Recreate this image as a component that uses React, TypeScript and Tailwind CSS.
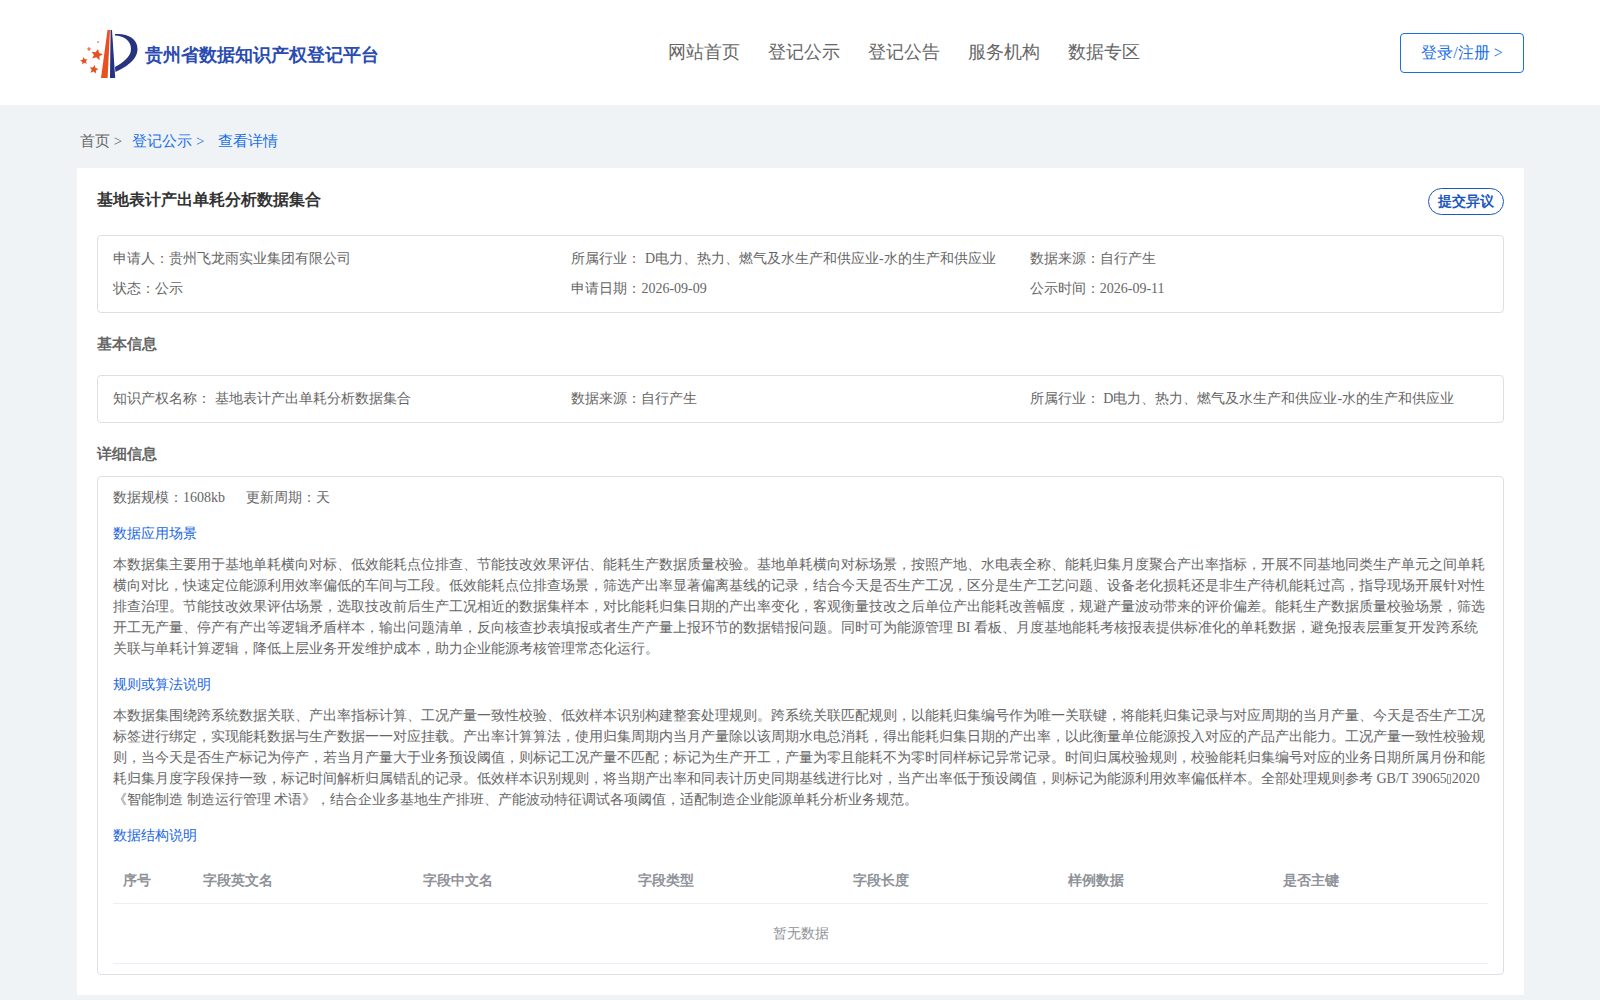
const navItems = ['网站首页', '登记公示', '登记公告', '服务机构', '数据专区'];

const sceneText =
  '本数据集主要用于基地单耗横向对标、低效能耗点位排查、节能技改效果评估、能耗生产数据质量校验。基地单耗横向对标场景，按照产地、水电表全称、能耗归集月度聚合产出率指标，开展不同基地同类生产单元之间单耗横向对比，快速定位能源利用效率偏低的车间与工段。低效能耗点位排查场景，筛选产出率显著偏离基线的记录，结合今天是否生产工况，区分是生产工艺问题、设备老化损耗还是非生产待机能耗过高，指导现场开展针对性排查治理。节能技改效果评估场景，选取技改前后生产工况相近的数据集样本，对比能耗归集日期的产出率变化，客观衡量技改之后单位产出能耗改善幅度，规避产量波动带来的评价偏差。能耗生产数据质量校验场景，筛选开工无产量、停产有产出等逻辑矛盾样本，输出问题清单，反向核查抄表填报或者生产产量上报环节的数据错报问题。同时可为能源管理 BI 看板、月度基地能耗考核报表提供标准化的单耗数据，避免报表层重复开发跨系统关联与单耗计算逻辑，降低上层业务开发维护成本，助力企业能源考核管理常态化运行。';

const ruleBefore =
  '本数据集围绕跨系统数据关联、产出率指标计算、工况产量一致性校验、低效样本识别构建整套处理规则。跨系统关联匹配规则，以能耗归集编号作为唯一关联键，将能耗归集记录与对应周期的当月产量、今天是否生产工况标签进行绑定，实现能耗数据与生产数据一一对应挂载。产出率计算算法，使用归集周期内当月产量除以该周期水电总消耗，得出能耗归集日期的产出率，以此衡量单位能源投入对应的产品产出能力。工况产量一致性校验规则，当今天是否生产标记为停产，若当月产量大于业务预设阈值，则标记工况产量不匹配；标记为生产开工，产量为零且能耗不为零时同样标记异常记录。时间归属校验规则，校验能耗归集编号对应的业务日期所属月份和能耗归集月度字段保持一致，标记时间解析归属错乱的记录。低效样本识别规则，将当期产出率和同表计历史同期基线进行比对，当产出率低于预设阈值，则标记为能源利用效率偏低样本。全部处理规则参考 GB/T 39065';
const ruleAfter =
  '2020《智能制造 制造运行管理 术语》，结合企业多基地生产排班、产能波动特征调试各项阈值，适配制造企业能源单耗分析业务规范。';

function Logo() {
  return (
    <svg width="60" height="52" viewBox="0 0 60 52" className="shrink-0">
      {/* stars */}
      <polygon points="17,20 18.8,23.6 22.8,24 19.8,26.6 20.8,30.5 17,28.4 13.2,30.5 14.2,26.6 11.2,24 15.2,23.6" transform="rotate(12 17 25)" fill="#e8501f" />
      <polygon points="4,28 5.1,30.5 7.8,30.8 5.8,32.6 6.4,35.2 4,33.8 1.6,35.2 2.2,32.6 0.2,30.8 2.9,30.5" transform="rotate(-10 4 32)" fill="#e8501f" />
      <polygon points="14,36 15.3,38.8 18.4,39.1 16.1,41.2 16.8,44.2 14,42.6 11.2,44.2 11.9,41.2 9.6,39.1 12.7,38.8" transform="rotate(10 14 40)" fill="#e8501f" />
      <circle cx="9" cy="20" r="1.7" fill="#ee7a4e" />
      <circle cx="18" cy="13" r="1" fill="#ee8a60" />
      {/* red wedge */}
      <path d="M27.5 1 L30 1 L27.6 49 L21 49 Z" fill="#e8501f" />
      {/* blue wedge and bowl */}
      <path d="M30.6 1 L32 1 L35.2 49 L30 49 Z" fill="#27337f" />
      <path d="M35 5 C47 4 57.5 9 57.5 20 C57.5 31 46 38 35.5 43 L35 38 C42 34 51 28 51 20 C51 11 43 7 35 6.5 Z" fill="#27337f" />
    </svg>
  );
}

function InfoItem({ label, value }: { label: string; value: string }) {
  return (
    <div className="w-[458.4px] shrink-0 whitespace-nowrap">
      {label}
      {value}
    </div>
  );
}

export default function App() {
  return (
    <div className="font-['Liberation_Serif',serif] min-h-screen bg-[#eff3f6] text-[#666666]">
      <header className="flex h-[105px] items-center bg-white pl-[80px] pr-[76px]">
        <div className="flex w-[588px] items-center pt-[4px]">
          <Logo />
          <span className="ml-[5px] pt-[2px] text-[18px] font-bold text-[#2a4bb0]">贵州省数据知识产权登记平台</span>
        </div>
        <nav className="flex gap-[28px] text-[18px] text-[#666666]">
          {navItems.map((item) => (
            <a key={item} className="cursor-pointer">
              {item}
            </a>
          ))}
        </nav>
        <button className="ml-auto h-[40px] w-[124px] rounded border border-[#1a6fe8] pt-[1px] text-[16px] text-[#1a6fe8]">
          登录/注册 &gt;
        </button>
      </header>

      <div className="flex h-[63px] items-center pl-[80px] text-[15px] pt-[9px]">
        <span>首页 &gt;</span>
        <span className="ml-[10px] text-[#1a6fe8]">登记公示 &gt;</span>
        <span className="ml-[14px] text-[#1a6fe8]">查看详情</span>
      </div>

      <main className="ml-[77px] mr-[76px] h-[827px] bg-white px-[20px] pt-[20px] text-[14px]">
        <div className="flex h-[28px] items-start justify-between">
          <h1 className="text-[16px] font-bold leading-[24px] text-[#333333]">基地表计产出单耗分析数据集合</h1>
          <button className="h-[27px] w-[76px] rounded-[14px] border border-[#1c57bd] text-[14px] font-bold text-[#1c57bd]">
            提交异议
          </button>
        </div>

        <div className="mt-[19px] flex h-[78px] flex-col gap-[10px] rounded border border-[#dcdfe6] px-[15px] pt-[13px] leading-[20px]">
          <div className="flex">
            <InfoItem label="申请人：" value="贵州飞龙雨实业集团有限公司" />
            <InfoItem label="所属行业： " value="D电力、热力、燃气及水生产和供应业-水的生产和供应业" />
            <InfoItem label="数据来源：" value="自行产生" />
          </div>
          <div className="flex">
            <InfoItem label="状态：" value="公示" />
            <InfoItem label="申请日期：" value="2026-09-09" />
            <InfoItem label="公示时间：" value="2026-09-11" />
          </div>
        </div>

        <h2 className="mt-[21px] text-[15px] font-bold leading-[20px]">基本信息</h2>

        <div className="mt-[21px] flex h-[48px] items-center rounded border border-[#dcdfe6] px-[15px] pb-[1px]">
          <InfoItem label="知识产权名称： " value="基地表计产出单耗分析数据集合" />
          <InfoItem label="数据来源：" value="自行产生" />
          <InfoItem label="所属行业： " value="D电力、热力、燃气及水生产和供应业-水的生产和供应业" />
        </div>

        <h2 className="mt-[21px] text-[15px] font-bold leading-[20px]">详细信息</h2>

        <div className="mt-[12px] h-[499px] rounded border border-[#dcdfe6] px-[15px] pt-[11px]">
          <div className="flex gap-[21px] leading-[20px]">
            <span>数据规模：1608kb</span>
            <span>更新周期：天</span>
          </div>

          <div className="mt-[16px] leading-[20px] text-[#1a66e0]">数据应用场景</div>
          <p className="mt-[10px] leading-[21px]">{sceneText}</p>

          <div className="mt-[15.5px] leading-[20px] text-[#1a66e0]">规则或算法说明</div>
          <p className="mt-[10px] leading-[21px]">
            {ruleBefore}
            {/* the source text has a character here that the font lacks: it shows as an empty box */}
            <span className="mx-[0.5px] inline-block h-[10px] w-[4px] border border-[#999999] align-[-1px]" />
            {ruleAfter}
          </p>

          <div className="mt-[16.5px] leading-[20px] text-[#1a66e0]">数据结构说明</div>

          <div className="mt-[9.5px] text-[#909399]">
            <div className="flex h-[48px] items-center border-b border-[#ebeef5] pt-[3px] font-bold">
              <div className="w-[80px] pl-[10px]">序号</div>
              <div className="w-[220px] pl-[10px]">字段英文名</div>
              <div className="w-[215px] pl-[10px]">字段中文名</div>
              <div className="w-[215px] pl-[10px]">字段类型</div>
              <div className="w-[215px] pl-[10px]">字段长度</div>
              <div className="w-[215px] pl-[10px]">样例数据</div>
              <div className="flex-1 pl-[10px]">是否主键</div>
            </div>
            <div className="flex h-[60px] items-center justify-center border-b border-[#ebeef5] pt-[1px]">暂无数据</div>
          </div>
        </div>
      </main>
    </div>
  );
}
